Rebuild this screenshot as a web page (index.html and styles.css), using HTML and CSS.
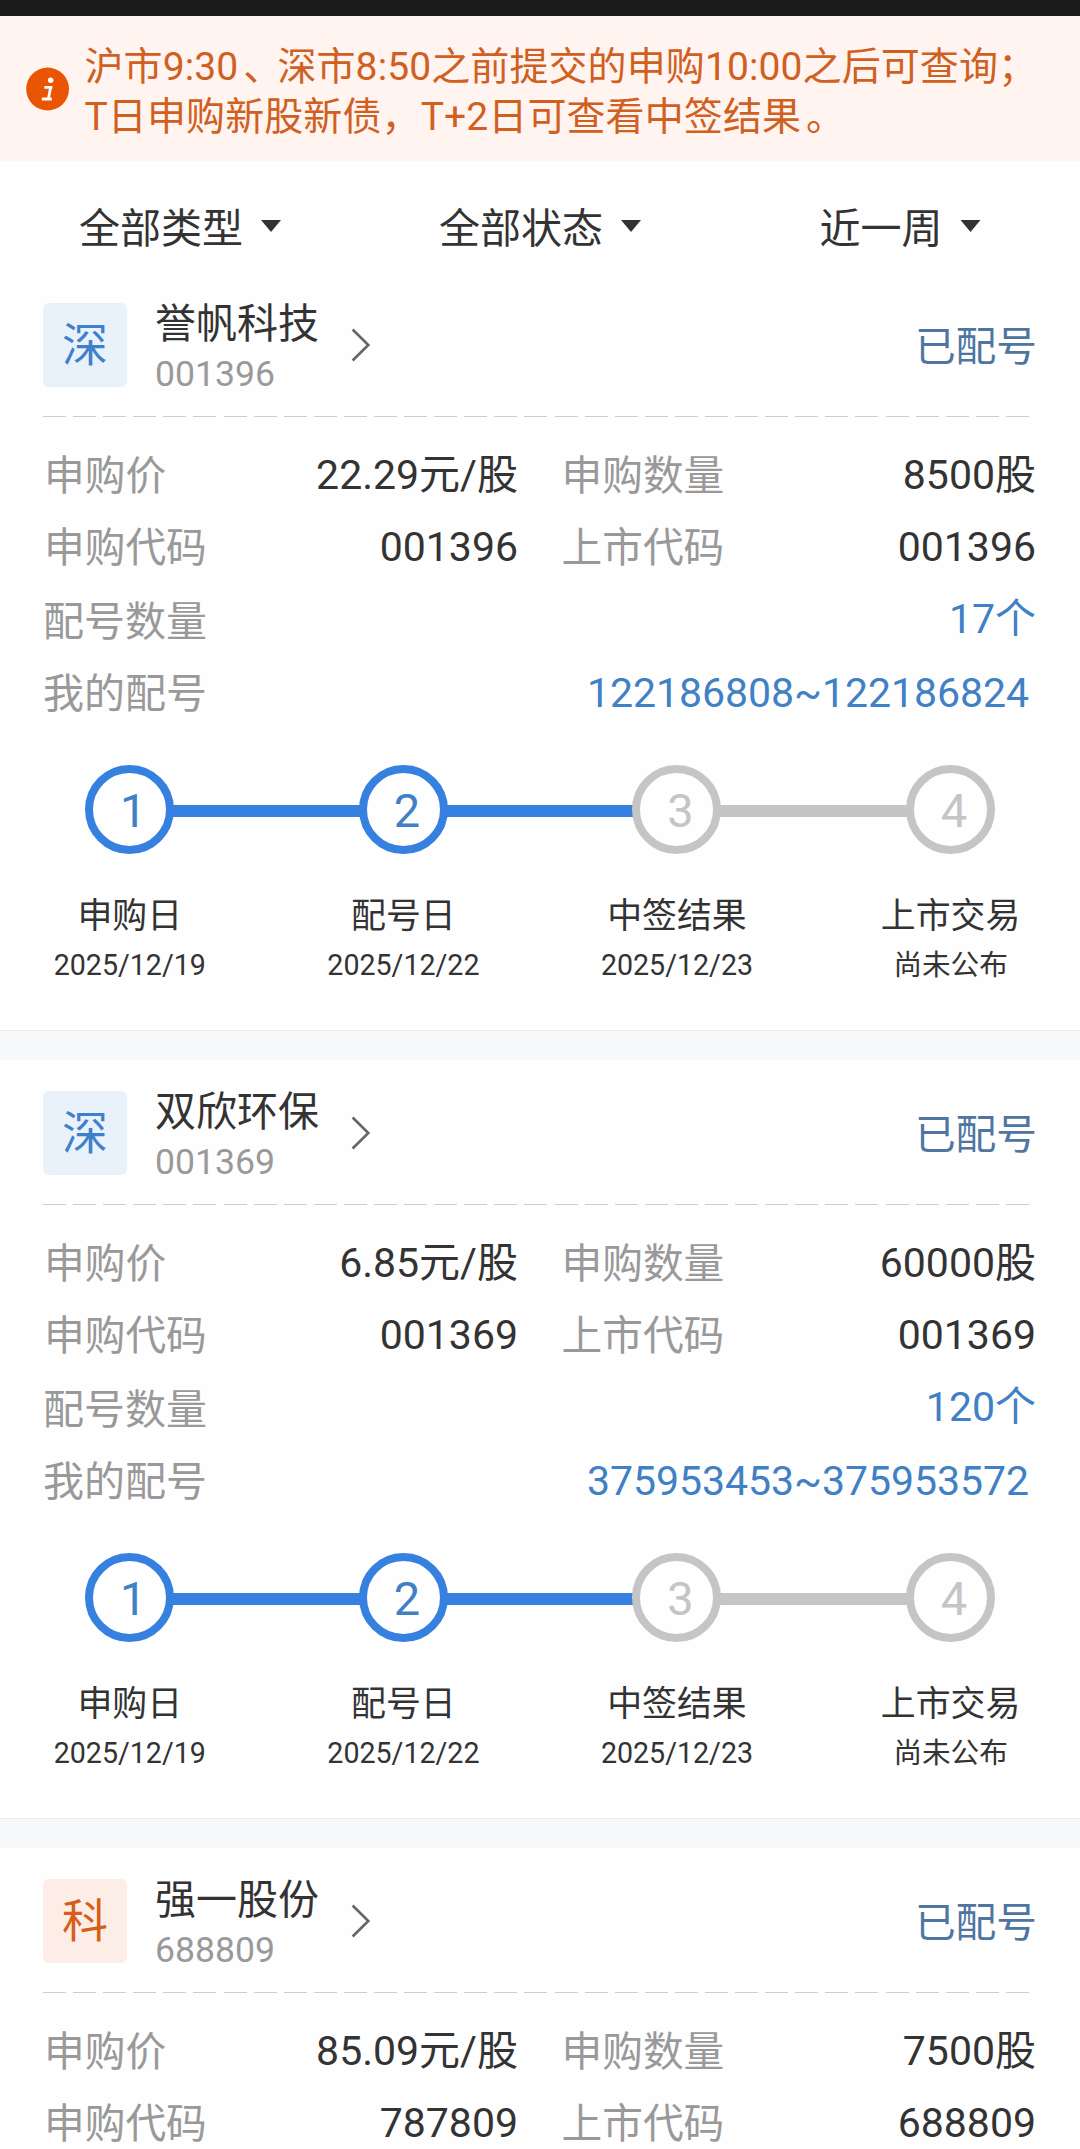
FILE: index.html
```html
<!DOCTYPE html>
<html lang="zh-CN">
<head>
<meta charset="utf-8">
<title>新股申购查询</title>
<link rel="stylesheet" href="styles.css">
</head>
<body>
<div class="topbar"></div>
<div class="notice">
  <svg class="notice-icon" width="44" height="44" viewBox="0 0 44 44" aria-hidden="true">
    <circle cx="21.6" cy="22" r="21.4" fill="#ea5504"/>
    <circle cx="24.7" cy="13.2" r="2.7" fill="#fff"/>
    <path d="M18.3 20.3H26.4M24.6 20.3L22.4 32M15.8 32H25.8" fill="none" stroke="#fff" stroke-width="2.8"/>
  </svg>
  <p class="notice-text">沪市9:30<span class="mark">、</span>深市8:50之前提交的申购10:00之后可查询；<br>T日申购新股新债，T+2日可查看中签结果<span class="mark">。</span></p>
</div>

<nav class="filters">
  <div class="filter">全部类型<i class="caret"></i></div>
  <div class="filter">全部状态<i class="caret"></i></div>
  <div class="filter">近一周<i class="caret"></i></div>
</nav>

<section class="card">
  <header class="head">
    <span class="badge">深</span>
    <div class="stock"><div class="name">誉帆科技</div><div class="code">001396</div></div>
    <svg class="chevron" width="20" height="34" viewBox="0 0 20 34"><path d="M1.6 1.5L17.3 17L1.6 32.5" fill="none" stroke="#666" stroke-width="2.6"/></svg>
    <span class="status">已配号</span>
  </header>
  <div class="dash"></div>
  <div class="rows">
    <div class="row"><span class="label">申购价</span><span class="value">22.29元/股</span><span class="label">申购数量</span><span class="value">8500股</span></div>
    <div class="row"><span class="label">申购代码</span><span class="value">001396</span><span class="label">上市代码</span><span class="value">001396</span></div>
    <div class="row row-count"><span class="label">配号数量</span><span class="value link">17个</span></div>
    <div class="row row-range"><span class="label">我的配号</span><span class="value link">122186808~122186824</span></div>
  </div>
  <ol class="steps">
    <li class="step done"><span class="ring">1</span><span class="step-name">申购日</span><span class="step-date">2025/12/19</span></li>
    <li class="step done"><span class="ring">2</span><span class="step-name">配号日</span><span class="step-date">2025/12/22</span></li>
    <li class="step"><span class="ring">3</span><span class="step-name">中签结果</span><span class="step-date">2025/12/23</span></li>
    <li class="step"><span class="ring">4</span><span class="step-name">上市交易</span><span class="step-date">尚未公布</span></li>
  </ol>
</section>
<div class="divider"></div>

<section class="card">
  <header class="head">
    <span class="badge">深</span>
    <div class="stock"><div class="name">双欣环保</div><div class="code">001369</div></div>
    <svg class="chevron" width="20" height="34" viewBox="0 0 20 34"><path d="M1.6 1.5L17.3 17L1.6 32.5" fill="none" stroke="#666" stroke-width="2.6"/></svg>
    <span class="status">已配号</span>
  </header>
  <div class="dash"></div>
  <div class="rows">
    <div class="row"><span class="label">申购价</span><span class="value">6.85元/股</span><span class="label">申购数量</span><span class="value">60000股</span></div>
    <div class="row"><span class="label">申购代码</span><span class="value">001369</span><span class="label">上市代码</span><span class="value">001369</span></div>
    <div class="row row-count"><span class="label">配号数量</span><span class="value link">120个</span></div>
    <div class="row row-range"><span class="label">我的配号</span><span class="value link">375953453~375953572</span></div>
  </div>
  <ol class="steps">
    <li class="step done"><span class="ring">1</span><span class="step-name">申购日</span><span class="step-date">2025/12/19</span></li>
    <li class="step done"><span class="ring">2</span><span class="step-name">配号日</span><span class="step-date">2025/12/22</span></li>
    <li class="step"><span class="ring">3</span><span class="step-name">中签结果</span><span class="step-date">2025/12/23</span></li>
    <li class="step"><span class="ring">4</span><span class="step-name">上市交易</span><span class="step-date">尚未公布</span></li>
  </ol>
</section>
<div class="divider"></div>

<section class="card card-last">
  <header class="head">
    <span class="badge badge-star">科</span>
    <div class="stock"><div class="name">强一股份</div><div class="code">688809</div></div>
    <svg class="chevron" width="20" height="34" viewBox="0 0 20 34"><path d="M1.6 1.5L17.3 17L1.6 32.5" fill="none" stroke="#666" stroke-width="2.6"/></svg>
    <span class="status">已配号</span>
  </header>
  <div class="dash"></div>
  <div class="rows">
    <div class="row"><span class="label">申购价</span><span class="value">85.09元/股</span><span class="label">申购数量</span><span class="value">7500股</span></div>
    <div class="row"><span class="label">申购代码</span><span class="value">787809</span><span class="label">上市代码</span><span class="value">688809</span></div>
  </div>
</section>
</body>
</html>
```
FILE: styles.css
```css
* { box-sizing: border-box; margin: 0; padding: 0; }
html { background: #fefefe; }
body {
  width: 1080px;
  height: 2149px;
  overflow: hidden;
  background: #fefefe;
  color: #333;
  font-family: Roboto, "Noto Sans CJK SC", sans-serif;
  font-size: 41px;
}

.topbar { height: 16px; background: #1c1c1c; }

.notice {
  display: flex;
  align-items: flex-start;
  height: 145px;
  padding: 26px 20px 0 26px;
  background: #fff4ef;
}
.notice-icon { flex: none; margin-top: 24.5px; }
.notice-text {
  margin-left: 14.5px;
  font-size: 39px;
  line-height: 50px;
  letter-spacing: 0.1px;
  color: #d0601f;
  white-space: nowrap;
}
/* Half-width mark, padded back to a full cell so that it sits nearer the middle */
.mark { margin: 0 14.5px 0 5px; font-feature-settings: "halt"; }

.filters {
  display: grid;
  grid-template-columns: repeat(3, 1fr);
  height: 111px;
  padding-top: 43px;
}
.filter { display: flex; justify-content: center; line-height: 50px; }
.caret {
  width: 20px;
  height: 12px;
  margin: 16px 0 0 18px;
  background: #333;
  clip-path: polygon(0 0, 100% 0, 50% 100%);
}

.card { height: 758px; }
.card-last { height: 301px; }
.divider { height: 30px; background: #f6f8fa; border-top: 1px solid #e9ebec; }

.head {
  display: flex;
  align-items: flex-start;
  height: 144px;
  padding: 31px 43px 0;
}
.badge {
  width: 84px;
  height: 84px;
  border-radius: 6px;
  background: #e9f2fb;
  color: #3f80cb;
  font-size: 46px;
  line-height: 84px;
  text-align: center;
}
.badge-star { background: #fceee6; color: #d65e1b; }
.stock { margin-left: 28px; }
.name { line-height: 42px; }
.code { margin-top: 11px; font-size: 35.6px; line-height: 36px; color: #999; }
.chevron { margin: 25px 0 0 32px; }
.status { margin: 21px 0 0 auto; font-size: 40.7px; line-height: 46px; color: #4f75a1; }

.dash {
  height: 1px;
  margin: 0 51px 0 43px;
  background: repeating-linear-gradient(90deg, #ccc 0 23px, transparent 23px 30.09px);
}

.rows { padding: 22px 44px 0; }
.row {
  display: grid;
  grid-template-columns: 240px 234px 270px 1fr;
  line-height: 72px;
}
.label { padding-top: 1px; height: 72px; font-size: 40.7px; color: #999; }
.value { text-align: right; }
.row > .label:nth-child(3) { padding-left: 43.5px; }
.row-count, .row-range { grid-template-columns: 240px 1fr; }
.row-count { height: 73px; }
.row-count .label, .row-range .label { margin-left: -1px; font-size: 41px; }
.row-count .label { padding-top: 3px; }
.row-range { line-height: 74px; }
.row-range .value { padding-right: 7px; letter-spacing: -0.03px; }
.link { color: #4080c4; }

.steps {
  display: grid;
  grid-template-columns: repeat(4, 273.6px);
  margin: 35px 0 0 -7px;
  list-style: none;
}
.step { position: relative; display: flex; flex-direction: column; align-items: center; }
.step:not(:last-child)::after {
  content: "";
  position: absolute;
  top: 40px;
  left: calc(50% + 43px);
  width: 187.6px;
  height: 12px;
  background: #c5c5c5;
}
.step.done::after { background: #3681e0; }
.ring {
  width: 89px;
  height: 89px;
  padding-left: 7px;
  border: 8.5px solid #c5c5c5;
  border-radius: 50%;
  color: #c5c5c5;
  font-size: 47px;
  line-height: 76px;
  text-align: center;
}
.done .ring { border-color: #3681e0; color: #4080c4; }
.step-name { margin-top: 43px; font-size: 34.9px; line-height: 40px; }
.step-date { margin-top: 11px; font-size: 28.6px; line-height: 34px; }
```
